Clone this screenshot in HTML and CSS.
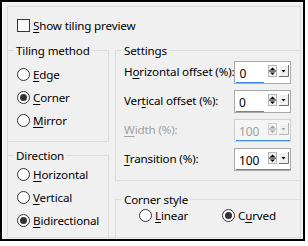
FILE: index.html
```html
<!DOCTYPE html>
<html lang="en">
<head>
    <meta charset="UTF-8">
    <meta name="viewport" content="width=device-width, initial-scale=1.0">
    <title>Seamless Tiling</title>
    <link rel="stylesheet" href="styles.css">
</head>
<body>
    <div class="frame">
        <div class="panel">
            <div class="check-row">
                <span class="checkbox"></span>
                <span><u>S</u>how tiling preview</span>
            </div>

            <div class="groups">
                <div class="col col-left">
                    <div class="group group-tiling">
                        <div class="legend">Tiling method</div>
                        <div class="radio-list">
                            <div class="radio-row"><span class="radio"></span><span><u>E</u>dge</span></div>
                            <div class="radio-row"><span class="radio checked"></span><span><u>C</u>orner</span></div>
                            <div class="radio-row"><span class="radio"></span><span><u>M</u>irror</span></div>
                        </div>
                    </div>
                    <div class="group group-direction">
                        <div class="legend">Direction</div>
                        <div class="radio-list">
                            <div class="radio-row"><span class="radio"></span><span><u>H</u>orizontal</span></div>
                            <div class="radio-row"><span class="radio"></span><span><u>V</u>ertical</span></div>
                            <div class="radio-row"><span class="radio checked"></span><span><u>B</u>idirectional</span></div>
                        </div>
                    </div>
                </div>

                <div class="col col-right">
                    <div class="group group-settings">
                        <div class="legend">Settings</div>
                        <div class="field-list">
                            <div class="field-row">
                                <span>H<u>o</u>rizontal offset (%):</span>
                                <div class="spin">
                                    <div class="spin-top">
                                        <span class="spin-value">0</span>
                                        <svg class="spin-arrows" width="21" height="12" viewBox="0 0 21 12">
                                            <rect x="0.5" y="0.5" width="8" height="11" fill="#f3f3f3" stroke="#b5b5b5"/>
                                            <line x1="1" y1="6" x2="8" y2="6" stroke="currentColor"/>
                                            <polygon points="2,5 7,5 4.5,2.5" fill="currentColor"/>
                                            <polygon points="2,7.5 7,7.5 4.5,10" fill="currentColor"/>
                                            <rect x="11" y="0" width="9" height="12" fill="#f0f0f0"/>
                                            <path d="M11.5 12V0.5H20" stroke="#fff" fill="none"/>
                                            <path d="M11 11.5H20.5V0" stroke="#6d6d6d" fill="none"/>
                                            <polygon points="13.5,5 17.5,5 15.5,7.5" fill="currentColor"/>
                                        </svg>
                                    </div>
                                    <div class="spin-bar" style="width: 50%"></div>
                                </div>
                            </div>
                            <div class="field-row">
                                <span>Ver<u>t</u>ical offset (%):</span>
                                <div class="spin">
                                    <div class="spin-top">
                                        <span class="spin-value">0</span>
                                        <svg class="spin-arrows" width="21" height="12" viewBox="0 0 21 12">
                                            <rect x="0.5" y="0.5" width="8" height="11" fill="#f3f3f3" stroke="#b5b5b5"/>
                                            <line x1="1" y1="6" x2="8" y2="6" stroke="currentColor"/>
                                            <polygon points="2,5 7,5 4.5,2.5" fill="currentColor"/>
                                            <polygon points="2,7.5 7,7.5 4.5,10" fill="currentColor"/>
                                            <rect x="11" y="0" width="9" height="12" fill="#f0f0f0"/>
                                            <path d="M11.5 12V0.5H20" stroke="#fff" fill="none"/>
                                            <path d="M11 11.5H20.5V0" stroke="#6d6d6d" fill="none"/>
                                            <polygon points="13.5,5 17.5,5 15.5,7.5" fill="currentColor"/>
                                        </svg>
                                    </div>
                                    <div class="spin-bar" style="width: 50%"></div>
                                </div>
                            </div>
                            <div class="field-row disabled">
                                <span><u>W</u>idth (%):</span>
                                <div class="spin">
                                    <div class="spin-top">
                                        <span class="spin-value">100</span>
                                        <svg class="spin-arrows" width="21" height="12" viewBox="0 0 21 12">
                                            <rect x="0.5" y="0.5" width="8" height="11" fill="#f3f3f3" stroke="#cfcfcf"/>
                                            <line x1="1" y1="6" x2="8" y2="6" stroke="currentColor"/>
                                            <polygon points="2,5 7,5 4.5,2.5" fill="currentColor"/>
                                            <polygon points="2,7.5 7,7.5 4.5,10" fill="currentColor"/>
                                            <rect x="11" y="0" width="9" height="12" fill="#f0f0f0"/>
                                            <path d="M11.5 12V0.5H20" stroke="#fff" fill="none"/>
                                            <path d="M11 11.5H20.5V0" stroke="#b5b5b5" fill="none"/>
                                            <polygon points="13.5,5 17.5,5 15.5,7.5" fill="currentColor"/>
                                        </svg>
                                    </div>
                                    <div class="spin-bar" style="width: 100%"></div>
                                </div>
                            </div>
                            <div class="field-row">
                                <span><u>T</u>ransition (%):</span>
                                <div class="spin">
                                    <div class="spin-top">
                                        <span class="spin-value">100</span>
                                        <svg class="spin-arrows" width="21" height="12" viewBox="0 0 21 12">
                                            <rect x="0.5" y="0.5" width="8" height="11" fill="#f3f3f3" stroke="#b5b5b5"/>
                                            <line x1="1" y1="6" x2="8" y2="6" stroke="currentColor"/>
                                            <polygon points="2,5 7,5 4.5,2.5" fill="currentColor"/>
                                            <polygon points="2,7.5 7,7.5 4.5,10" fill="currentColor"/>
                                            <rect x="11" y="0" width="9" height="12" fill="#f0f0f0"/>
                                            <path d="M11.5 12V0.5H20" stroke="#fff" fill="none"/>
                                            <path d="M11 11.5H20.5V0" stroke="#6d6d6d" fill="none"/>
                                            <polygon points="13.5,5 17.5,5 15.5,7.5" fill="currentColor"/>
                                        </svg>
                                    </div>
                                    <div class="spin-bar" style="width: 100%"></div>
                                </div>
                            </div>
                        </div>
                    </div>
                    <div class="group group-corner">
                        <div class="legend">Corner style</div>
                        <div class="corner-row">
                            <div class="radio-item"><span class="radio"></span><span><u>L</u>inear</span></div>
                            <div class="radio-item"><span class="radio checked"></span><span>C<u>u</u>rved</span></div>
                        </div>
                    </div>
                </div>
            </div>
        </div>
    </div>
</body>
</html>
```

FILE: styles.css
```css
* {
    box-sizing: border-box;
}
body {
    margin: 0;
    background-color: #fff;
    font-family: "Noto Sans", "Open Sans", sans-serif;
    font-size: 11.6px;
    letter-spacing: -0.15px;
    line-height: 15px;
    white-space: nowrap;
    color: #000;
}
u {
    text-underline-offset: 2px;
}
.frame {
    width: 305px;
    height: 241px;
    border: 2px solid #000;
    background-color: #f0f0f0;
    box-shadow: inset 1px 1px 0 #fff;
    padding: 4px 0 0 5px;
}
.panel {
    width: 294px;
    height: 232px;
    border: 1px solid #dcdcdc;
    display: flex;
    flex-direction: column;
}
.check-row {
    display: flex;
    align-items: center;
    gap: 3px;
    height: 13px;
    margin: 12px 0 0 9px;
}
.checkbox {
    width: 13px;
    height: 13px;
    border: 1px solid #333;
    background-color: #fff;
}
.groups {
    flex: 1;
    display: flex;
    gap: 6px;
    margin: 18px -1px -1px -1px;
}
.col {
    display: flex;
    flex-direction: column;
}
.col-left {
    width: 102px;
}
.col-right {
    width: 186px;
}
.group {
    border: 1px solid #dcdcdc;
    display: flex;
    flex-direction: column;
}
.legend {
    align-self: flex-start;
    margin: -8px 0 0 6px;
    padding: 0 2px;
    background-color: #f0f0f0;
}

/* radio buttons */
.group-tiling {
    height: 92px;
}
.group-tiling .radio-list {
    padding-top: 5px;
}
.group-direction {
    flex: 1;
    margin-top: 13px;
}
.radio-list {
    padding-left: 9px;
}
.radio-row, .radio-item {
    display: flex;
    align-items: center;
    gap: 3px;
}
.radio-row {
    height: 23px;
}
.radio {
    width: 13px;
    height: 13px;
    border: 1px solid #333;
    border-radius: 50%;
    background-color: #fff;
    position: relative;
}
.radio.checked::after {
    content: "";
    position: absolute;
    left: 2px;
    top: 2px;
    width: 7px;
    height: 7px;
    border-radius: 50%;
    background-color: #333;
}

/* settings */
.group-settings {
    height: 131px;
}
.field-list {
    padding: 3px 9px 0 8px;
    display: flex;
    flex-direction: column;
    gap: 6px;
}
.field-row {
    display: flex;
    align-items: center;
    justify-content: space-between;
}
.field-row > span {
    margin-top: -3px;
}
.field-row.disabled {
    color: #a0a0a0;
}
.spin {
    width: 57px;
    height: 23px;
    border: 1px solid #a8a8a8;
    background-color: #fff;
    display: flex;
    flex-direction: column;
    color: #000;
}
.spin-top {
    flex: 1;
    display: flex;
    justify-content: space-between;
    padding: 3px 1px 0 4px;
}
.spin-value {
    font-size: 12px;
    line-height: 17px;
}
.spin-bar {
    height: 3px;
    margin-left: 1px;
    background-color: #3d8ee6;
    max-width: 54px;
}
.disabled .spin {
    border-color: #d0d0d0;
    background-color: #f5f5f5;
    color: #a0a0a0;
}

/* corner style */
.group-corner {
    flex: 1;
    margin-top: 18px;
}
.corner-row {
    display: flex;
    align-items: center;
    height: 15px;
    margin-top: 1px;
    padding-left: 23px;
}
.corner-row .radio-item:first-child {
    width: 83px;
}
```
